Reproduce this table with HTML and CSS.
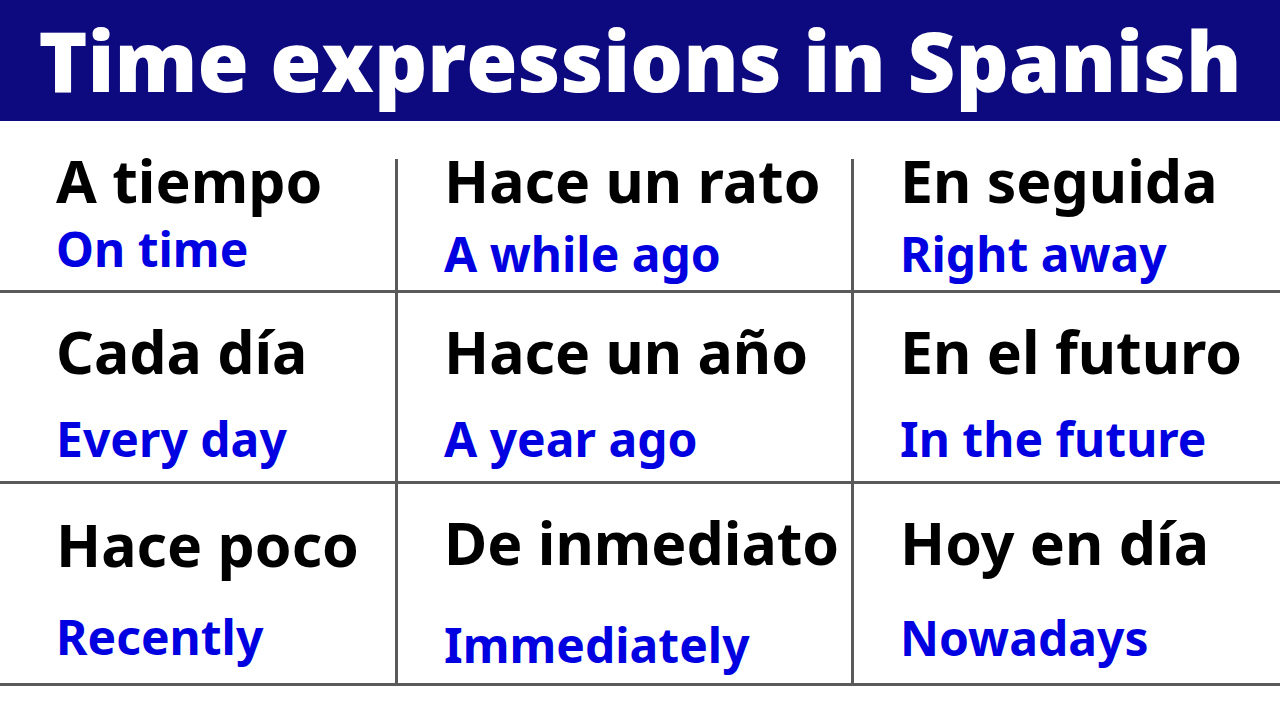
FILE: index.html
```html
<!DOCTYPE html>
<html lang="es">
<head>
<meta charset="utf-8">
<title>Time expressions in Spanish</title>
<link rel="stylesheet" href="styles.css">
</head>
<body>
<header class="banner">
  <h1 class="banner-title">Time expressions in Spanish</h1>
</header>
<main class="table">
  <div class="cell row-1 col-1 tight"><span class="es">A tiempo</span><span class="en">On time</span></div>
  <div class="cell row-1 col-2"><span class="es">Hace un rato</span><span class="en">A while ago</span></div>
  <div class="cell row-1 col-3"><span class="es">En seguida</span><span class="en">Right away</span></div>

  <div class="cell row-2 col-1"><span class="es">Cada día</span><span class="en">Every day</span></div>
  <div class="cell row-2 col-2"><span class="es">Hace un año</span><span class="en">A year ago</span></div>
  <div class="cell row-2 col-3"><span class="es">En el futuro</span><span class="en">In the future</span></div>

  <div class="cell row-3 col-1 near"><span class="es">Hace poco</span><span class="en">Recently</span></div>
  <div class="cell row-3 col-2 far"><span class="es">De inmediato</span><span class="en">Immediately</span></div>
  <div class="cell row-3 col-3"><span class="es">Hoy en día</span><span class="en">Nowadays</span></div>
</main>
</body>
</html>
```

FILE: styles.css
```css
* { box-sizing: border-box; }

html, body {
  margin: 0;
  padding: 0;
  background: #ffffff;
  width: 1280px;
  height: 720px;
  overflow: hidden;
}

body {
  font-family: "Noto Sans", "Open Sans", sans-serif;
}

.banner {
  height: 121px;
  background: #0c0a7e;
  display: flex;
  justify-content: center;
  padding-top: 18px;
}

.banner-title {
  margin: 0;
  font-family: "Open Sans", "Noto Sans", sans-serif;
  font-weight: 800;
  font-size: 83px;
  line-height: 83px;
  color: #ffffff;
  white-space: nowrap;
}

.table {
  margin-top: 38px;
  display: grid;
  grid-template-columns: 398px 456px 1fr;
  grid-template-rows: 134px 191px 202px;
}

.cell {
  display: flex;
  flex-direction: column;
  align-items: flex-start;
  border-bottom: 3px solid #5a5a5a;
  padding-left: 46px;
}

.col-1 { padding-left: 56px; border-right: 3px solid #5a5a5a; }
.col-2 { border-right: 3px solid #5a5a5a; }

.es {
  font-weight: 700;
  font-size: 59px;
  line-height: 42px;
  color: #000000;
  white-space: nowrap;
}

.en {
  font-weight: 700;
  font-size: 48px;
  line-height: 36px;
  color: #0000e0;
  white-space: nowrap;
}

.row-1 { padding-top: 0; gap: 35px; }
.row-2 { padding-top: 37px; gap: 49px; }
.row-3 { padding-top: 37px; gap: 57px; }

.row-1.tight { gap: 30px; }
.row-3.near { padding-top: 39px; gap: 54px; }
.row-3.far { gap: 64px; }
```
